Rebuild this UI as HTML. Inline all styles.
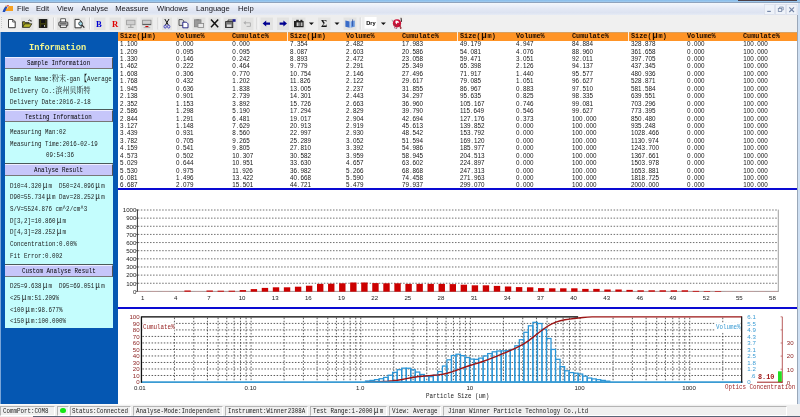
<!DOCTYPE html><html><head><meta charset="utf-8"><title>Winner Particle Size Analyser</title><style>

html,body{margin:0;padding:0;}
body{width:800px;height:417px;overflow:hidden;position:relative;background:#fff;font-family:"Liberation Sans","Noto Sans CJK SC",sans-serif;}
.abs{position:absolute;}
.t{position:absolute;white-space:pre;font:7px/8px "Liberation Mono","Noto Serif CJK SC",monospace;color:#1c1c1c;transform-origin:0 50%;transform:scaleX(.835);height:8px;}
.t b{font-weight:normal;font-size:8.4px;line-height:0;font-family:"Liberation Mono","Noto Serif CJK SC",serif;}
.t i,.h i,.s i{font-style:normal;display:inline-block;width:8.4px;text-align:center;font-size:9.4px;line-height:0;}
.h i{width:7.2px}
.h{position:absolute;white-space:pre;font:bold 7px/8px "Liberation Mono","Noto Serif CJK SC",monospace;color:#1a0a00;transform-origin:0 50%;transform:scaleX(.976);height:8px;}
.m{position:absolute;white-space:pre;font:7.6px/9px "Liberation Sans","Noto Sans CJK SC",sans-serif;color:#15151c;top:4px;height:9px;}
.s{position:absolute;white-space:pre;font:7px/8px "Liberation Mono","Noto Serif CJK SC",monospace;color:#1c1c1c;transform-origin:0 50%;transform:scaleX(.835);height:8px;top:406.5px;}
.box{position:absolute;left:5px;width:108px;background:#c4fdfd;}
.hd{position:absolute;left:5px;width:107px;height:10px;background:#c6c6fa;border-right:1px solid #555;border-bottom:1px solid #777;border-top:1px solid #eef;box-sizing:content-box;}
.ttl{position:absolute;left:29.4px;top:41.5px;height:12px;white-space:pre;font:bold 9.8px/12px "Liberation Mono","Noto Serif CJK SC",monospace;color:#f3f78e;transform-origin:0 50%;transform:scaleX(.885);}
.n{position:absolute;white-space:pre;font:6.31px/8px "Liberation Sans",sans-serif;color:#151515;height:8px;}
.n u{text-decoration:none;display:inline-block;width:3.51px;text-align:center;}
.sp{position:absolute;top:405.5px;height:10px;border:1px solid;border-color:#b4b4b4 #fff #fff #b4b4b4;box-sizing:border-box;}

</style></head><body><div id="w" style="position:absolute;left:0;top:0;width:800px;height:417px;overflow:hidden;will-change:transform">
<div class="abs" style="left:0;top:0;width:800px;height:3px;background:linear-gradient(#84bbea,#b4d4f1);"></div>
<div class="abs" style="left:738px;top:0;width:59px;height:1.4px;background:#4c4048;"></div>
<div class="abs" style="left:0;top:2.5px;width:800px;height:12px;background:linear-gradient(#f4f7fc,#e4e9f5 45%,#dde3f1 80%,#e6ebf5);"></div>
<div class="abs" style="left:0;top:2.2px;width:800px;height:.8px;background:#8fa3bd;"></div>
<div class="abs" style="left:0;top:14.6px;width:800px;height:17.2px;background:#f0f0f0;"></div>
<div class="abs" style="left:0;top:14.6px;width:404px;height:17.2px;background:#eeeeee;"></div>
<div class="m" style="left:17px">File</div>
<div class="m" style="left:36px">Edit</div>
<div class="m" style="left:57px">View</div>
<div class="m" style="left:81.2px">Analyse</div>
<div class="m" style="left:115.2px">Meassure</div>
<div class="m" style="left:157px">Windows</div>
<div class="m" style="left:196px">Language</div>
<div class="m" style="left:238px">Help</div>
<svg class="abs" style="left:2px;top:4px" width="12" height="9" viewBox="0 0 12 9"><path d="M1 7 L4 1 L5 5 L7 2 L11 2 L11 7 Z" fill="#f5a020"/><path d="M0.5 8 Q3 1 5.5 3 Q4 5 3 8Z" fill="#2050c0"/><path d="M4.5 1.5 L7 1 L6 3Z" fill="#d03020"/></svg>
<svg class="abs" style="left:764.4px;top:3.5px" width="34" height="11" viewBox="0 0 34 11"><rect x="0.5" y="0.5" width="10" height="10" fill="#eef2f9" stroke="#d5dbe8" stroke-width=".6"/><rect x="3.2" y="6.8" width="3.6" height="1.2" fill="#7485a6"/><rect x="11.5" y="0.5" width="10" height="10" fill="#eef2f9" stroke="#d5dbe8" stroke-width=".6"/><rect x="14.3" y="4.4" width="3.4" height="3" fill="none" stroke="#7485a6" stroke-width=".8"/><path d="M15.6 4.2V3.1H19.2V6H17.9" fill="none" stroke="#7485a6" stroke-width=".8"/><rect x="22.5" y="0.5" width="10.5" height="10" fill="#eef2f9" stroke="#d5dbe8" stroke-width=".6"/><path d="M25.3 3.3L30 8M30 3.3L25.3 8" stroke="#7485a6" stroke-width="1.1"/></svg>
<svg class="abs" style="left:0;top:0" width="800" height="32" viewBox="0 0 800 32"><path d="M1.5 17v12" stroke="#c8c8c8" stroke-width="1" stroke-dasharray="1 1"/><path d="M53.5 17.5v12" stroke="#c2c2c2" stroke-width=".8"/><path d="M54.3 17.5v12" stroke="#fff" stroke-width=".8"/><path d="M89.5 17.5v12" stroke="#c2c2c2" stroke-width=".8"/><path d="M90.3 17.5v12" stroke="#fff" stroke-width=".8"/><path d="M158 17.5v12" stroke="#c2c2c2" stroke-width=".8"/><path d="M158.8 17.5v12" stroke="#fff" stroke-width=".8"/><path d="M257 17.5v12" stroke="#c2c2c2" stroke-width=".8"/><path d="M257.8 17.5v12" stroke="#fff" stroke-width=".8"/><path d="M360.3 17.5v12" stroke="#c2c2c2" stroke-width=".8"/><path d="M361.1 17.5v12" stroke="#fff" stroke-width=".8"/><rect x="21" y="17.5" width="12.5" height="12.5" fill="#e3e3e2"/><rect x="37.3" y="17.5" width="11.5" height="12.5" fill="#e3e3e2"/><rect x="57" y="17.5" width="12.5" height="12.5" fill="#e3e3e2"/><rect x="73" y="17.5" width="12.5" height="12.5" fill="#e3e3e2"/><rect x="162" y="17.5" width="10" height="12.5" fill="#e3e3e2"/><rect x="177" y="17.5" width="12.5" height="12.5" fill="#e3e3e2"/><rect x="343.5" y="17.5" width="13" height="12.5" fill="#e3e3e2"/><rect x="94" y="17.5" width="11.5" height="12.5" fill="#e3e3e2"/><rect x="109.5" y="17.5" width="11.5" height="12.5" fill="#e3e3e2"/><rect x="124.5" y="17.5" width="12.5" height="12.5" fill="#e3e3e2"/><rect x="140.5" y="17.5" width="12.5" height="12.5" fill="#e3e3e2"/><rect x="192.5" y="17.5" width="13" height="12.5" fill="#e3e3e2"/><rect x="208.5" y="17.5" width="12" height="12.5" fill="#e3e3e2"/><rect x="223.5" y="17.5" width="14" height="12.5" fill="#e3e3e2"/><rect x="241" y="17.5" width="12.5" height="12.5" fill="#e3e3e2"/><rect x="260.5" y="17.5" width="12.5" height="12.5" fill="#e3e3e2"/><rect x="277" y="17.5" width="12" height="12.5" fill="#e3e3e2"/><rect x="292" y="17.5" width="13.5" height="12.5" fill="#e3e3e2"/><rect x="318" y="17.5" width="12.5" height="12.5" fill="#e3e3e2"/><path d="M8.5 19.5h4.4l2.3 2.3v5.9h-6.7z" fill="#fff" stroke="#222" stroke-width=".9"/><path d="M12.7 19.6v2.4h2.4" fill="none" stroke="#222" stroke-width=".7"/><path d="M22.5 27.3v-5.6h2.2l.8.9h3.6v1.3" fill="#8c8c18" stroke="#222" stroke-width=".8"/><path d="M22.6 27.4l2-3.6h7.2l-2.2 3.6z" fill="#b4b428" stroke="#222" stroke-width=".8"/><path d="M28.3 20.6q1.6-1.4 2.8.3" fill="none" stroke="#222" stroke-width=".8"/><path d="M30.3 21.6l1.4-.2-.3-1.5z" fill="#222"/><rect x="39.3" y="19.6" width="7.6" height="7.8" fill="#3c3c0c" stroke="#111" stroke-width=".9"/><rect x="41" y="19.8" width="4.3" height="3.2" fill="#111"/><rect x="41.2" y="24.6" width="4" height="2.8" fill="#111"/><rect x="44" y="25.1" width=".9" height="1.7" fill="#ddd"/><rect x="60.8" y="18.8" width="4.8" height="3.4" fill="#fff" stroke="#222" stroke-width=".7"/><rect x="58.8" y="22" width="9" height="4" rx=".8" fill="#c8c8c8" stroke="#222" stroke-width=".8"/><rect x="60.3" y="25" width="6" height="2.6" fill="#eee" stroke="#222" stroke-width=".7"/><path d="M60 23.5h6.5" stroke="#333" stroke-width=".6"/><path d="M75 19.4h4.2l2 2v6.4H75z" fill="#fff" stroke="#222" stroke-width=".9"/><circle cx="80.6" cy="23.6" r="1.9" fill="#9fd8e8" stroke="#222" stroke-width=".8"/><path d="M82 25.2l2.3 2.5" stroke="#222" stroke-width="1.2"/><path d="M164.8 19l3.6 6.2M169 19l-3.6 6.2" stroke="#111" stroke-width="1"/><ellipse cx="165.2" cy="26.6" rx="1.2" ry="1.5" fill="none" stroke="#3838c0" stroke-width=".9"/><ellipse cx="168.7" cy="26.6" rx="1.2" ry="1.5" fill="none" stroke="#3838c0" stroke-width=".9"/><path d="M179 19.6h3.4l1.4 1.4v4.4H179z" fill="#ddd" stroke="#333" stroke-width=".8"/><path d="M182.8 22.2h3.6l1.6 1.6v4H182.8z" fill="#fff" stroke="#181880" stroke-width=".9"/><rect x="194.5" y="19.8" width="6.5" height="7" fill="#9a9a9a" stroke="#808080" stroke-width=".8"/><rect x="196.4" y="19" width="2.8" height="1.6" fill="#888"/><rect x="198" y="23.4" width="5.6" height="4.2" fill="#e8e8e8" stroke="#888" stroke-width=".8"/><path d="M211 19.6l7.2 7.6M218.2 19.6l-7.2 7.6" stroke="#111" stroke-width="1.5"/><rect x="225.6" y="21.6" width="7.2" height="6" fill="#777" stroke="#222" stroke-width=".8"/><rect x="227" y="24.5" width="4.4" height="2.4" fill="#ddd"/><path d="M228 21.6v-1.6h5.2" fill="none" stroke="#222" stroke-width=".8"/><rect x="232.6" y="19.2" width="3" height="2.6" fill="#1a1a90"/><path d="M244 22.8h6.4v3.6h-3.8" fill="none" stroke="#b0b0b0" stroke-width="1"/><path d="M245.8 20.8l-2.4 2 2.4 2z" fill="#b0b0b0"/><path d="M262.6 23.6l3.6-3v1.9h3.8v2.2h-3.8v1.9z" fill="#000090"/><path d="M287 23.6l-3.6-3v1.9h-3.8v2.2h3.8v1.9z" fill="#000090"/><rect x="294" y="21" width="9.6" height="6.2" fill="#222"/><rect x="296.2" y="19.8" width="2.6" height="1.4" fill="#222"/><rect x="300.4" y="19.8" width="2" height="1.4" fill="#222"/><rect x="296.6" y="22.4" width="2" height="3.6" fill="#ccc"/><rect x="299.4" y="22.4" width="1" height="3.6" fill="#aaa"/><rect x="301.2" y="22.4" width="1.2" height="3.6" fill="#ddd"/><path d="M308.9 22.4h5l-2.5 2.7z" fill="#111"/><path d="M334.5 22.4h5l-2.5 2.7z" fill="#111"/><path d="M380.9 22.4h5l-2.5 2.7z" fill="#111"/><path d="M345.4 20.4l4.4 1v6.4l-4.4-1z" fill="#3a6cc8"/><path d="M354.8 20.4l-4.4 1v6.4l4.4-1z" fill="#6a9ae0"/><path d="M350.1 19.2v9.2" stroke="#c8d8f0" stroke-width=".9"/><path d="M352.6 19.4v7" stroke="#1a3a90" stroke-width=".7"/><rect x="364.6" y="17" width="12" height="11.6" fill="#fff"/><path d="M391.4 19.6l2 .6-.8 2.2z" fill="#b8b8b8"/><circle cx="397" cy="23.3" r="4.1" fill="#cc1038"/><path d="M395.6 20.4l2.6.6 1 2-1.6-.4-1 1.6-1.2-1.4z" fill="#fff"/><path d="M394.6 24.2l1.6 1.8" stroke="#3a6a4a" stroke-width=".8"/><path d="M401 17.8l.5 4" stroke="#2a1a1a" stroke-width="1"/><path d="M399.6 25.4l1.4 3.2" stroke="#8a0818" stroke-width="1.5"/><path d="M399.9 26.4v1.6" stroke="#fff" stroke-width=".6"/><path d="M394.6 27.2l.6 1.4M396.6 27.6v1.2" stroke="#702040" stroke-width=".8"/><text x="98.9" y="26.8" font-family="Liberation Serif,serif" font-weight="bold" font-size="8.6" fill="#0000d0" text-anchor="middle">B</text><text x="115" y="26.8" font-family="Liberation Serif,serif" font-weight="bold" font-size="8.6" fill="#e00000" text-anchor="middle">R</text><text x="324" y="27" font-family="Liberation Serif,serif" font-weight="bold" font-size="9.5" fill="#111" text-anchor="middle">&#931;</text><text x="366.2" y="25.1" font-family="Liberation Sans,sans-serif" font-weight="bold" font-size="6.1" fill="#000" textLength="9.5" lengthAdjust="spacingAndGlyphs">Dry</text><rect x="126.6" y="20.2" width="8.4" height="4.6" fill="#cfcfcf" stroke="#999" stroke-width=".8"/><path d="M130.8 24.8v2.2M128 27.4h5.6" stroke="#999" stroke-width=".9"/><rect x="142.6" y="20.2" width="8.4" height="4.6" fill="#cfcfcf" stroke="#888" stroke-width=".8"/><path d="M142.6 24.4h8.4" stroke="#555" stroke-width="1"/><path d="M145.4 26.6h3" stroke="#d00000" stroke-width="1.2"/><path d="M143.6 27.6h6.6" stroke="#999" stroke-width=".7"/></svg>
<div class="abs" style="left:0;top:31.8px;width:117.6px;height:372px;background:#0557b2;"></div>
<div class="abs" style="left:0;top:31.8px;width:.7px;height:372px;background:#7aa5d8;"></div>
<div class="ttl">Information</div>
<div class="box" style="top:57px;height:52.2px"></div>
<div class="abs" style="left:5px;top:109.2px;width:108px;height:.9px;background:#4a5a5a"></div>
<div class="box" style="top:110.1px;height:52.5px"></div>
<div class="abs" style="left:5px;top:162.6px;width:108px;height:.9px;background:#4a5a5a"></div>
<div class="box" style="top:163.5px;height:100.10000000000002px"></div>
<div class="abs" style="left:5px;top:263.6px;width:108px;height:.9px;background:#4a5a5a"></div>
<div class="box" style="top:264.5px;height:63.5px"></div>
<div class="hd" style="top:57px"></div>
<div class="t" style="left:27px;top:59.1px;color:#000">Sample Information</div>
<div class="hd" style="top:110.1px"></div>
<div class="t" style="left:25.3px;top:112.89999999999999px;color:#000">Testing Information</div>
<div class="hd" style="top:163.5px"></div>
<div class="t" style="left:34px;top:165.6px;color:#000">Analyse Result</div>
<div class="hd" style="top:264.5px"></div>
<div class="t" style="left:21.8px;top:266.6px;color:#000">Custom Analyse Result</div>
<div class="t" style="left:10px;top:75.2px;">Sample Name:<b class="c">粉末</b>-gan<b class="c">【</b>Average</div>
<div class="t" style="left:10px;top:87.2px;">Delivery Co.:<b class="c">滨州贝斯特</b></div>
<div class="t" style="left:10px;top:98.3px;">Delivery Date:2016-2-18</div>
<div class="t" style="left:10px;top:127.60000000000001px;">Measuring Man:02</div>
<div class="t" style="left:10px;top:139.6px;">Measuring Time:2016-02-19</div>
<div class="t" style="left:45.5px;top:151.29999999999998px;">09:54:36</div>
<div class="t" style="left:10px;top:181.7px;">D10=4.320<i>μ</i>m  D50=24.096<i>μ</i>m</div>
<div class="t" style="left:10px;top:192.7px;">D90=55.734<i>μ</i>m Dav=28.252<i>μ</i>m</div>
<div class="t" style="left:10px;top:204.5px;">S/V=5524.876 cm^2/cm^3</div>
<div class="t" style="left:10px;top:216.89999999999998px;">D[3,2]=10.860<i>μ</i>m</div>
<div class="t" style="left:10px;top:228.29999999999998px;">D[4,3]=28.252<i>μ</i>m</div>
<div class="t" style="left:10px;top:239.5px;">Concentration:0.00%</div>
<div class="t" style="left:10px;top:251.89999999999998px;">Fit Error:0.002</div>
<div class="t" style="left:10px;top:282.0px;">D25=9.638<i>μ</i>m  D95=69.051<i>μ</i>m</div>
<div class="t" style="left:10px;top:293.9px;">&lt;25<i>μ</i>m:51.209%</div>
<div class="t" style="left:10px;top:305.5px;">&lt;100<i>μ</i>m:98.677%</div>
<div class="t" style="left:10px;top:317.0px;">&lt;150<i>μ</i>m:100.000%</div>
<div class="abs" style="left:117.6px;top:32px;width:679.6px;height:8.5px;background:#ff9426;"></div>
<div class="abs" style="left:117.6px;top:31.6px;width:679.6px;height:.7px;background:#d9a060;"></div>
<div class="abs" style="left:286.8px;top:32px;width:1.0px;height:8.5px;background:#fdf0e0;"></div>
<div class="abs" style="left:456.9px;top:32px;width:1.5px;height:8.5px;background:#fdf0e0;"></div>
<div class="abs" style="left:627.8px;top:32px;width:1.2px;height:8.5px;background:#fdf0e0;"></div>
<div class="abs" style="left:117.6px;top:41px;width:679.6px;height:147.2px;overflow:hidden;">
<div class="n" style="left:2.4px;top:-0.80px">1<u>.</u>100</div>
<div class="n" style="left:58.4px;top:-0.80px">0<u>.</u>000</div>
<div class="n" style="left:114.6px;top:-0.80px">0<u>.</u>000</div>
<div class="n" style="left:2.4px;top:6.63px">1<u>.</u>209</div>
<div class="n" style="left:58.4px;top:6.63px">0<u>.</u>095</div>
<div class="n" style="left:114.6px;top:6.63px">0<u>.</u>095</div>
<div class="n" style="left:2.4px;top:14.06px">1<u>.</u>330</div>
<div class="n" style="left:58.4px;top:14.06px">0<u>.</u>146</div>
<div class="n" style="left:114.6px;top:14.06px">0<u>.</u>242</div>
<div class="n" style="left:2.4px;top:21.49px">1<u>.</u>462</div>
<div class="n" style="left:58.4px;top:21.49px">0<u>.</u>222</div>
<div class="n" style="left:114.6px;top:21.49px">0<u>.</u>464</div>
<div class="n" style="left:2.4px;top:28.92px">1<u>.</u>608</div>
<div class="n" style="left:58.4px;top:28.92px">0<u>.</u>306</div>
<div class="n" style="left:114.6px;top:28.92px">0<u>.</u>770</div>
<div class="n" style="left:2.4px;top:36.35px">1<u>.</u>768</div>
<div class="n" style="left:58.4px;top:36.35px">0<u>.</u>432</div>
<div class="n" style="left:114.6px;top:36.35px">1<u>.</u>202</div>
<div class="n" style="left:2.4px;top:43.78px">1<u>.</u>945</div>
<div class="n" style="left:58.4px;top:43.78px">0<u>.</u>636</div>
<div class="n" style="left:114.6px;top:43.78px">1<u>.</u>838</div>
<div class="n" style="left:2.4px;top:51.21px">2<u>.</u>138</div>
<div class="n" style="left:58.4px;top:51.21px">0<u>.</u>901</div>
<div class="n" style="left:114.6px;top:51.21px">2<u>.</u>739</div>
<div class="n" style="left:2.4px;top:58.64px">2<u>.</u>352</div>
<div class="n" style="left:58.4px;top:58.64px">1<u>.</u>153</div>
<div class="n" style="left:114.6px;top:58.64px">3<u>.</u>892</div>
<div class="n" style="left:2.4px;top:66.07px">2<u>.</u>586</div>
<div class="n" style="left:58.4px;top:66.07px">1<u>.</u>298</div>
<div class="n" style="left:114.6px;top:66.07px">5<u>.</u>190</div>
<div class="n" style="left:2.4px;top:73.50px">2<u>.</u>844</div>
<div class="n" style="left:58.4px;top:73.50px">1<u>.</u>291</div>
<div class="n" style="left:114.6px;top:73.50px">6<u>.</u>481</div>
<div class="n" style="left:2.4px;top:80.93px">3<u>.</u>127</div>
<div class="n" style="left:58.4px;top:80.93px">1<u>.</u>148</div>
<div class="n" style="left:114.6px;top:80.93px">7<u>.</u>629</div>
<div class="n" style="left:2.4px;top:88.36px">3<u>.</u>439</div>
<div class="n" style="left:58.4px;top:88.36px">0<u>.</u>931</div>
<div class="n" style="left:114.6px;top:88.36px">8<u>.</u>560</div>
<div class="n" style="left:2.4px;top:95.79px">3<u>.</u>782</div>
<div class="n" style="left:58.4px;top:95.79px">0<u>.</u>705</div>
<div class="n" style="left:114.6px;top:95.79px">9<u>.</u>265</div>
<div class="n" style="left:2.4px;top:103.22px">4<u>.</u>159</div>
<div class="n" style="left:58.4px;top:103.22px">0<u>.</u>541</div>
<div class="n" style="left:114.6px;top:103.22px">9<u>.</u>805</div>
<div class="n" style="left:2.4px;top:110.65px">4<u>.</u>573</div>
<div class="n" style="left:58.4px;top:110.65px">0<u>.</u>502</div>
<div class="n" style="left:114.6px;top:110.65px">10<u>.</u>307</div>
<div class="n" style="left:2.4px;top:118.08px">5<u>.</u>029</div>
<div class="n" style="left:58.4px;top:118.08px">0<u>.</u>644</div>
<div class="n" style="left:114.6px;top:118.08px">10<u>.</u>951</div>
<div class="n" style="left:2.4px;top:125.51px">5<u>.</u>530</div>
<div class="n" style="left:58.4px;top:125.51px">0<u>.</u>975</div>
<div class="n" style="left:114.6px;top:125.51px">11<u>.</u>926</div>
<div class="n" style="left:2.4px;top:132.94px">6<u>.</u>081</div>
<div class="n" style="left:58.4px;top:132.94px">1<u>.</u>496</div>
<div class="n" style="left:114.6px;top:132.94px">13<u>.</u>422</div>
<div class="n" style="left:2.4px;top:140.37px">6<u>.</u>687</div>
<div class="n" style="left:58.4px;top:140.37px">2<u>.</u>079</div>
<div class="n" style="left:114.6px;top:140.37px">15<u>.</u>501</div>
<div class="n" style="left:172.3px;top:-0.80px">7<u>.</u>354</div>
<div class="n" style="left:228.3px;top:-0.80px">2<u>.</u>482</div>
<div class="n" style="left:284.5px;top:-0.80px">17<u>.</u>983</div>
<div class="n" style="left:172.3px;top:6.63px">8<u>.</u>087</div>
<div class="n" style="left:228.3px;top:6.63px">2<u>.</u>603</div>
<div class="n" style="left:284.5px;top:6.63px">20<u>.</u>586</div>
<div class="n" style="left:172.3px;top:14.06px">8<u>.</u>893</div>
<div class="n" style="left:228.3px;top:14.06px">2<u>.</u>472</div>
<div class="n" style="left:284.5px;top:14.06px">23<u>.</u>058</div>
<div class="n" style="left:172.3px;top:21.49px">9<u>.</u>779</div>
<div class="n" style="left:228.3px;top:21.49px">2<u>.</u>291</div>
<div class="n" style="left:284.5px;top:21.49px">25<u>.</u>349</div>
<div class="n" style="left:172.3px;top:28.92px">10<u>.</u>754</div>
<div class="n" style="left:228.3px;top:28.92px">2<u>.</u>146</div>
<div class="n" style="left:284.5px;top:28.92px">27<u>.</u>496</div>
<div class="n" style="left:172.3px;top:36.35px">11<u>.</u>826</div>
<div class="n" style="left:228.3px;top:36.35px">2<u>.</u>122</div>
<div class="n" style="left:284.5px;top:36.35px">29<u>.</u>617</div>
<div class="n" style="left:172.3px;top:43.78px">13<u>.</u>005</div>
<div class="n" style="left:228.3px;top:43.78px">2<u>.</u>237</div>
<div class="n" style="left:284.5px;top:43.78px">31<u>.</u>855</div>
<div class="n" style="left:172.3px;top:51.21px">14<u>.</u>301</div>
<div class="n" style="left:228.3px;top:51.21px">2<u>.</u>443</div>
<div class="n" style="left:284.5px;top:51.21px">34<u>.</u>297</div>
<div class="n" style="left:172.3px;top:58.64px">15<u>.</u>726</div>
<div class="n" style="left:228.3px;top:58.64px">2<u>.</u>663</div>
<div class="n" style="left:284.5px;top:58.64px">36<u>.</u>960</div>
<div class="n" style="left:172.3px;top:66.07px">17<u>.</u>294</div>
<div class="n" style="left:228.3px;top:66.07px">2<u>.</u>829</div>
<div class="n" style="left:284.5px;top:66.07px">39<u>.</u>790</div>
<div class="n" style="left:172.3px;top:73.50px">19<u>.</u>017</div>
<div class="n" style="left:228.3px;top:73.50px">2<u>.</u>904</div>
<div class="n" style="left:284.5px;top:73.50px">42<u>.</u>694</div>
<div class="n" style="left:172.3px;top:80.93px">20<u>.</u>913</div>
<div class="n" style="left:228.3px;top:80.93px">2<u>.</u>919</div>
<div class="n" style="left:284.5px;top:80.93px">45<u>.</u>613</div>
<div class="n" style="left:172.3px;top:88.36px">22<u>.</u>997</div>
<div class="n" style="left:228.3px;top:88.36px">2<u>.</u>930</div>
<div class="n" style="left:284.5px;top:88.36px">48<u>.</u>542</div>
<div class="n" style="left:172.3px;top:95.79px">25<u>.</u>289</div>
<div class="n" style="left:228.3px;top:95.79px">3<u>.</u>052</div>
<div class="n" style="left:284.5px;top:95.79px">51<u>.</u>594</div>
<div class="n" style="left:172.3px;top:103.22px">27<u>.</u>810</div>
<div class="n" style="left:228.3px;top:103.22px">3<u>.</u>392</div>
<div class="n" style="left:284.5px;top:103.22px">54<u>.</u>986</div>
<div class="n" style="left:172.3px;top:110.65px">30<u>.</u>582</div>
<div class="n" style="left:228.3px;top:110.65px">3<u>.</u>959</div>
<div class="n" style="left:284.5px;top:110.65px">58<u>.</u>945</div>
<div class="n" style="left:172.3px;top:118.08px">33<u>.</u>630</div>
<div class="n" style="left:228.3px;top:118.08px">4<u>.</u>657</div>
<div class="n" style="left:284.5px;top:118.08px">63<u>.</u>602</div>
<div class="n" style="left:172.3px;top:125.51px">36<u>.</u>982</div>
<div class="n" style="left:228.3px;top:125.51px">5<u>.</u>266</div>
<div class="n" style="left:284.5px;top:125.51px">68<u>.</u>868</div>
<div class="n" style="left:172.3px;top:132.94px">40<u>.</u>668</div>
<div class="n" style="left:228.3px;top:132.94px">5<u>.</u>590</div>
<div class="n" style="left:284.5px;top:132.94px">74<u>.</u>458</div>
<div class="n" style="left:172.3px;top:140.37px">44<u>.</u>721</div>
<div class="n" style="left:228.3px;top:140.37px">5<u>.</u>479</div>
<div class="n" style="left:284.5px;top:140.37px">79<u>.</u>937</div>
<div class="n" style="left:342.3px;top:-0.80px">49<u>.</u>179</div>
<div class="n" style="left:398.3px;top:-0.80px">4<u>.</u>947</div>
<div class="n" style="left:454.5px;top:-0.80px">84<u>.</u>884</div>
<div class="n" style="left:342.3px;top:6.63px">54<u>.</u>081</div>
<div class="n" style="left:398.3px;top:6.63px">4<u>.</u>076</div>
<div class="n" style="left:454.5px;top:6.63px">88<u>.</u>960</div>
<div class="n" style="left:342.3px;top:14.06px">59<u>.</u>471</div>
<div class="n" style="left:398.3px;top:14.06px">3<u>.</u>051</div>
<div class="n" style="left:454.5px;top:14.06px">92<u>.</u>011</div>
<div class="n" style="left:342.3px;top:21.49px">65<u>.</u>398</div>
<div class="n" style="left:398.3px;top:21.49px">2<u>.</u>126</div>
<div class="n" style="left:454.5px;top:21.49px">94<u>.</u>137</div>
<div class="n" style="left:342.3px;top:28.92px">71<u>.</u>917</div>
<div class="n" style="left:398.3px;top:28.92px">1<u>.</u>440</div>
<div class="n" style="left:454.5px;top:28.92px">95<u>.</u>577</div>
<div class="n" style="left:342.3px;top:36.35px">79<u>.</u>085</div>
<div class="n" style="left:398.3px;top:36.35px">1<u>.</u>051</div>
<div class="n" style="left:454.5px;top:36.35px">96<u>.</u>627</div>
<div class="n" style="left:342.3px;top:43.78px">86<u>.</u>967</div>
<div class="n" style="left:398.3px;top:43.78px">0<u>.</u>883</div>
<div class="n" style="left:454.5px;top:43.78px">97<u>.</u>510</div>
<div class="n" style="left:342.3px;top:51.21px">95<u>.</u>635</div>
<div class="n" style="left:398.3px;top:51.21px">0<u>.</u>825</div>
<div class="n" style="left:454.5px;top:51.21px">98<u>.</u>335</div>
<div class="n" style="left:342.3px;top:58.64px">105<u>.</u>167</div>
<div class="n" style="left:398.3px;top:58.64px">0<u>.</u>746</div>
<div class="n" style="left:454.5px;top:58.64px">99<u>.</u>081</div>
<div class="n" style="left:342.3px;top:66.07px">115<u>.</u>649</div>
<div class="n" style="left:398.3px;top:66.07px">0<u>.</u>546</div>
<div class="n" style="left:454.5px;top:66.07px">99<u>.</u>627</div>
<div class="n" style="left:342.3px;top:73.50px">127<u>.</u>176</div>
<div class="n" style="left:398.3px;top:73.50px">0<u>.</u>373</div>
<div class="n" style="left:454.5px;top:73.50px">100<u>.</u>000</div>
<div class="n" style="left:342.3px;top:80.93px">139<u>.</u>852</div>
<div class="n" style="left:398.3px;top:80.93px">0<u>.</u>000</div>
<div class="n" style="left:454.5px;top:80.93px">100<u>.</u>000</div>
<div class="n" style="left:342.3px;top:88.36px">153<u>.</u>792</div>
<div class="n" style="left:398.3px;top:88.36px">0<u>.</u>000</div>
<div class="n" style="left:454.5px;top:88.36px">100<u>.</u>000</div>
<div class="n" style="left:342.3px;top:95.79px">169<u>.</u>120</div>
<div class="n" style="left:398.3px;top:95.79px">0<u>.</u>000</div>
<div class="n" style="left:454.5px;top:95.79px">100<u>.</u>000</div>
<div class="n" style="left:342.3px;top:103.22px">185<u>.</u>977</div>
<div class="n" style="left:398.3px;top:103.22px">0<u>.</u>000</div>
<div class="n" style="left:454.5px;top:103.22px">100<u>.</u>000</div>
<div class="n" style="left:342.3px;top:110.65px">204<u>.</u>513</div>
<div class="n" style="left:398.3px;top:110.65px">0<u>.</u>000</div>
<div class="n" style="left:454.5px;top:110.65px">100<u>.</u>000</div>
<div class="n" style="left:342.3px;top:118.08px">224<u>.</u>897</div>
<div class="n" style="left:398.3px;top:118.08px">0<u>.</u>000</div>
<div class="n" style="left:454.5px;top:118.08px">100<u>.</u>000</div>
<div class="n" style="left:342.3px;top:125.51px">247<u>.</u>313</div>
<div class="n" style="left:398.3px;top:125.51px">0<u>.</u>000</div>
<div class="n" style="left:454.5px;top:125.51px">100<u>.</u>000</div>
<div class="n" style="left:342.3px;top:132.94px">271<u>.</u>963</div>
<div class="n" style="left:398.3px;top:132.94px">0<u>.</u>000</div>
<div class="n" style="left:454.5px;top:132.94px">100<u>.</u>000</div>
<div class="n" style="left:342.3px;top:140.37px">299<u>.</u>070</div>
<div class="n" style="left:398.3px;top:140.37px">0<u>.</u>000</div>
<div class="n" style="left:454.5px;top:140.37px">100<u>.</u>000</div>
<div class="n" style="left:513.5px;top:-0.80px">328<u>.</u>878</div>
<div class="n" style="left:569.5px;top:-0.80px">0<u>.</u>000</div>
<div class="n" style="left:625.7px;top:-0.80px">100<u>.</u>000</div>
<div class="n" style="left:513.5px;top:6.63px">361<u>.</u>658</div>
<div class="n" style="left:569.5px;top:6.63px">0<u>.</u>000</div>
<div class="n" style="left:625.7px;top:6.63px">100<u>.</u>000</div>
<div class="n" style="left:513.5px;top:14.06px">397<u>.</u>705</div>
<div class="n" style="left:569.5px;top:14.06px">0<u>.</u>000</div>
<div class="n" style="left:625.7px;top:14.06px">100<u>.</u>000</div>
<div class="n" style="left:513.5px;top:21.49px">437<u>.</u>345</div>
<div class="n" style="left:569.5px;top:21.49px">0<u>.</u>000</div>
<div class="n" style="left:625.7px;top:21.49px">100<u>.</u>000</div>
<div class="n" style="left:513.5px;top:28.92px">480<u>.</u>936</div>
<div class="n" style="left:569.5px;top:28.92px">0<u>.</u>000</div>
<div class="n" style="left:625.7px;top:28.92px">100<u>.</u>000</div>
<div class="n" style="left:513.5px;top:36.35px">528<u>.</u>871</div>
<div class="n" style="left:569.5px;top:36.35px">0<u>.</u>000</div>
<div class="n" style="left:625.7px;top:36.35px">100<u>.</u>000</div>
<div class="n" style="left:513.5px;top:43.78px">581<u>.</u>584</div>
<div class="n" style="left:569.5px;top:43.78px">0<u>.</u>000</div>
<div class="n" style="left:625.7px;top:43.78px">100<u>.</u>000</div>
<div class="n" style="left:513.5px;top:51.21px">639<u>.</u>551</div>
<div class="n" style="left:569.5px;top:51.21px">0<u>.</u>000</div>
<div class="n" style="left:625.7px;top:51.21px">100<u>.</u>000</div>
<div class="n" style="left:513.5px;top:58.64px">703<u>.</u>296</div>
<div class="n" style="left:569.5px;top:58.64px">0<u>.</u>000</div>
<div class="n" style="left:625.7px;top:58.64px">100<u>.</u>000</div>
<div class="n" style="left:513.5px;top:66.07px">773<u>.</u>395</div>
<div class="n" style="left:569.5px;top:66.07px">0<u>.</u>000</div>
<div class="n" style="left:625.7px;top:66.07px">100<u>.</u>000</div>
<div class="n" style="left:513.5px;top:73.50px">850<u>.</u>480</div>
<div class="n" style="left:569.5px;top:73.50px">0<u>.</u>000</div>
<div class="n" style="left:625.7px;top:73.50px">100<u>.</u>000</div>
<div class="n" style="left:513.5px;top:80.93px">935<u>.</u>248</div>
<div class="n" style="left:569.5px;top:80.93px">0<u>.</u>000</div>
<div class="n" style="left:625.7px;top:80.93px">100<u>.</u>000</div>
<div class="n" style="left:513.5px;top:88.36px">1028<u>.</u>466</div>
<div class="n" style="left:569.5px;top:88.36px">0<u>.</u>000</div>
<div class="n" style="left:625.7px;top:88.36px">100<u>.</u>000</div>
<div class="n" style="left:513.5px;top:95.79px">1130<u>.</u>974</div>
<div class="n" style="left:569.5px;top:95.79px">0<u>.</u>000</div>
<div class="n" style="left:625.7px;top:95.79px">100<u>.</u>000</div>
<div class="n" style="left:513.5px;top:103.22px">1243<u>.</u>700</div>
<div class="n" style="left:569.5px;top:103.22px">0<u>.</u>000</div>
<div class="n" style="left:625.7px;top:103.22px">100<u>.</u>000</div>
<div class="n" style="left:513.5px;top:110.65px">1367<u>.</u>661</div>
<div class="n" style="left:569.5px;top:110.65px">0<u>.</u>000</div>
<div class="n" style="left:625.7px;top:110.65px">100<u>.</u>000</div>
<div class="n" style="left:513.5px;top:118.08px">1503<u>.</u>978</div>
<div class="n" style="left:569.5px;top:118.08px">0<u>.</u>000</div>
<div class="n" style="left:625.7px;top:118.08px">100<u>.</u>000</div>
<div class="n" style="left:513.5px;top:125.51px">1653<u>.</u>881</div>
<div class="n" style="left:569.5px;top:125.51px">0<u>.</u>000</div>
<div class="n" style="left:625.7px;top:125.51px">100<u>.</u>000</div>
<div class="n" style="left:513.5px;top:132.94px">1818<u>.</u>725</div>
<div class="n" style="left:569.5px;top:132.94px">0<u>.</u>000</div>
<div class="n" style="left:625.7px;top:132.94px">100<u>.</u>000</div>
<div class="n" style="left:513.5px;top:140.37px">2000<u>.</u>000</div>
<div class="n" style="left:569.5px;top:140.37px">0<u>.</u>000</div>
<div class="n" style="left:625.7px;top:140.37px">100<u>.</u>000</div>
</div>
<div class="h" style="left:120.0px;top:32.40px">Size(<i>μ</i>m)</div>
<div class="h" style="left:176.0px;top:32.40px">Volume%</div>
<div class="h" style="left:232.2px;top:32.40px">Cumulate%</div>
<div class="h" style="left:289.9px;top:32.40px">Size(<i>μ</i>m)</div>
<div class="h" style="left:345.9px;top:32.40px">Volume%</div>
<div class="h" style="left:402.1px;top:32.40px">Cumulate%</div>
<div class="h" style="left:459.9px;top:32.40px">Size(<i>μ</i>m)</div>
<div class="h" style="left:515.9px;top:32.40px">Volume%</div>
<div class="h" style="left:572.1px;top:32.40px">Cumulate%</div>
<div class="h" style="left:631.1px;top:32.40px">Size(<i>μ</i>m)</div>
<div class="h" style="left:687.1px;top:32.40px">Volume%</div>
<div class="h" style="left:743.3px;top:32.40px">Cumulate%</div>
<div class="abs" style="left:117.6px;top:188.2px;width:679.6px;height:2.1px;background:#0a0ad2;"></div>
<div class="abs" style="left:117.6px;top:307px;width:679.6px;height:2.2px;background:#0a0ad2;"></div>
<div class="abs" style="left:797.2px;top:14.5px;width:.8px;height:402px;background:#9aa7b8;"></div>
<div class="abs" style="left:798px;top:3px;width:2px;height:414px;background:#cfe0f3;"></div>
<svg class="abs" style="left:0;top:0;font-family:'Liberation Sans',sans-serif" width="800" height="417" viewBox="0 0 800 417"><path d="M137.8 283.26H778.2" stroke="#404040" stroke-width=".75" stroke-dasharray="1.5 1.55"/><path d="M137.8 275.12H778.2" stroke="#404040" stroke-width=".75" stroke-dasharray="1.5 1.55"/><path d="M137.8 266.98H778.2" stroke="#404040" stroke-width=".75" stroke-dasharray="1.5 1.55"/><path d="M137.8 258.84H778.2" stroke="#404040" stroke-width=".75" stroke-dasharray="1.5 1.55"/><path d="M137.8 250.70H778.2" stroke="#404040" stroke-width=".75" stroke-dasharray="1.5 1.55"/><path d="M137.8 242.56H778.2" stroke="#404040" stroke-width=".75" stroke-dasharray="1.5 1.55"/><path d="M137.8 234.42H778.2" stroke="#404040" stroke-width=".75" stroke-dasharray="1.5 1.55"/><path d="M137.8 226.28H778.2" stroke="#404040" stroke-width=".75" stroke-dasharray="1.5 1.55"/><path d="M137.8 218.14H778.2" stroke="#404040" stroke-width=".75" stroke-dasharray="1.5 1.55"/><path d="M137.8 210.00H778.2" stroke="#404040" stroke-width=".75" stroke-dasharray="1.5 1.55"/><path d="M137.4 209.4V291.8" stroke="#333" stroke-width="1"/><path d="M778.3 209.6V291.6" stroke="#777" stroke-width=".7"/><path d="M137 291.4H778.6" stroke="#9a8a8a" stroke-width=".9"/><path d="M136 291.40h1.6" stroke="#333" stroke-width=".7"/><text x="136.4" y="293.70" text-anchor="end" font-size="6.1" fill="#222">0</text><path d="M136 283.26h1.6" stroke="#333" stroke-width=".7"/><text x="136.4" y="285.56" text-anchor="end" font-size="6.1" fill="#222">100</text><path d="M136 275.12h1.6" stroke="#333" stroke-width=".7"/><text x="136.4" y="277.42" text-anchor="end" font-size="6.1" fill="#222">200</text><path d="M136 266.98h1.6" stroke="#333" stroke-width=".7"/><text x="136.4" y="269.28" text-anchor="end" font-size="6.1" fill="#222">300</text><path d="M136 258.84h1.6" stroke="#333" stroke-width=".7"/><text x="136.4" y="261.14" text-anchor="end" font-size="6.1" fill="#222">400</text><path d="M136 250.70h1.6" stroke="#333" stroke-width=".7"/><text x="136.4" y="253.00" text-anchor="end" font-size="6.1" fill="#222">500</text><path d="M136 242.56h1.6" stroke="#333" stroke-width=".7"/><text x="136.4" y="244.86" text-anchor="end" font-size="6.1" fill="#222">600</text><path d="M136 234.42h1.6" stroke="#333" stroke-width=".7"/><text x="136.4" y="236.72" text-anchor="end" font-size="6.1" fill="#222">700</text><path d="M136 226.28h1.6" stroke="#333" stroke-width=".7"/><text x="136.4" y="228.58" text-anchor="end" font-size="6.1" fill="#222">800</text><path d="M136 218.14h1.6" stroke="#333" stroke-width=".7"/><text x="136.4" y="220.44" text-anchor="end" font-size="6.1" fill="#222">900</text><path d="M136 210.00h1.6" stroke="#333" stroke-width=".7"/><text x="136.4" y="212.30" text-anchor="end" font-size="6.1" fill="#222">1000</text><rect x="140.20" y="291.45" width="6.4" height="0.25" fill="#e89090"/><text x="142.60" y="299.6" text-anchor="middle" font-size="6.1" fill="#222">1</text><rect x="151.25" y="291.45" width="6.4" height="0.25" fill="#e89090"/><rect x="162.30" y="291.45" width="6.4" height="0.25" fill="#e89090"/><rect x="173.35" y="291.45" width="6.4" height="0.25" fill="#e89090"/><text x="175.75" y="299.6" text-anchor="middle" font-size="6.1" fill="#222">4</text><rect x="184.40" y="290.50" width="6.4" height="1.20" fill="#cc0000"/><rect x="195.45" y="291.45" width="6.4" height="0.25" fill="#e89090"/><rect x="206.50" y="290.50" width="6.4" height="1.20" fill="#cc0000"/><text x="208.90" y="299.6" text-anchor="middle" font-size="6.1" fill="#222">7</text><rect x="217.55" y="290.70" width="6.4" height="1.00" fill="#cc0000"/><rect x="228.60" y="290.70" width="6.4" height="1.00" fill="#cc0000"/><rect x="239.65" y="290.10" width="6.4" height="1.60" fill="#cc0000"/><text x="242.05" y="299.6" text-anchor="middle" font-size="6.1" fill="#222">10</text><rect x="250.70" y="289.10" width="6.4" height="2.60" fill="#cc0000"/><rect x="261.75" y="287.90" width="6.4" height="3.80" fill="#cc0000"/><rect x="272.80" y="287.30" width="6.4" height="4.40" fill="#cc0000"/><text x="275.20" y="299.6" text-anchor="middle" font-size="6.1" fill="#222">13</text><rect x="283.85" y="287.30" width="6.4" height="4.40" fill="#cc0000"/><rect x="294.90" y="286.70" width="6.4" height="5.00" fill="#cc0000"/><rect x="305.95" y="285.70" width="6.4" height="6.00" fill="#cc0000"/><text x="308.35" y="299.6" text-anchor="middle" font-size="6.1" fill="#222">16</text><rect x="317.00" y="283.90" width="6.4" height="7.80" fill="#cc0000"/><rect x="328.05" y="283.70" width="6.4" height="8.00" fill="#cc0000"/><rect x="339.10" y="283.30" width="6.4" height="8.40" fill="#cc0000"/><text x="341.50" y="299.6" text-anchor="middle" font-size="6.1" fill="#222">19</text><rect x="350.15" y="282.50" width="6.4" height="9.20" fill="#cc0000"/><rect x="361.20" y="282.50" width="6.4" height="9.20" fill="#cc0000"/><rect x="372.25" y="283.10" width="6.4" height="8.60" fill="#cc0000"/><text x="374.65" y="299.6" text-anchor="middle" font-size="6.1" fill="#222">22</text><rect x="383.30" y="283.30" width="6.4" height="8.40" fill="#cc0000"/><rect x="394.35" y="283.30" width="6.4" height="8.40" fill="#cc0000"/><rect x="405.40" y="283.90" width="6.4" height="7.80" fill="#cc0000"/><text x="407.80" y="299.6" text-anchor="middle" font-size="6.1" fill="#222">25</text><rect x="416.45" y="283.90" width="6.4" height="7.80" fill="#cc0000"/><rect x="427.50" y="283.90" width="6.4" height="7.80" fill="#cc0000"/><rect x="438.55" y="283.90" width="6.4" height="7.80" fill="#cc0000"/><text x="440.95" y="299.6" text-anchor="middle" font-size="6.1" fill="#222">28</text><rect x="449.60" y="284.10" width="6.4" height="7.60" fill="#cc0000"/><rect x="460.65" y="284.70" width="6.4" height="7.00" fill="#cc0000"/><rect x="471.70" y="285.30" width="6.4" height="6.40" fill="#cc0000"/><text x="474.10" y="299.6" text-anchor="middle" font-size="6.1" fill="#222">31</text><rect x="482.75" y="285.30" width="6.4" height="6.40" fill="#cc0000"/><rect x="493.80" y="285.90" width="6.4" height="5.80" fill="#cc0000"/><rect x="504.85" y="286.50" width="6.4" height="5.20" fill="#cc0000"/><text x="507.25" y="299.6" text-anchor="middle" font-size="6.1" fill="#222">34</text><rect x="515.90" y="287.10" width="6.4" height="4.60" fill="#cc0000"/><rect x="526.95" y="287.30" width="6.4" height="4.40" fill="#cc0000"/><rect x="538.00" y="288.10" width="6.4" height="3.60" fill="#cc0000"/><text x="540.40" y="299.6" text-anchor="middle" font-size="6.1" fill="#222">37</text><rect x="549.05" y="288.30" width="6.4" height="3.40" fill="#cc0000"/><rect x="560.10" y="288.30" width="6.4" height="3.40" fill="#cc0000"/><rect x="571.15" y="288.30" width="6.4" height="3.40" fill="#cc0000"/><text x="573.55" y="299.6" text-anchor="middle" font-size="6.1" fill="#222">40</text><rect x="582.20" y="288.90" width="6.4" height="2.80" fill="#cc0000"/><rect x="593.25" y="288.90" width="6.4" height="2.80" fill="#cc0000"/><rect x="604.30" y="289.50" width="6.4" height="2.20" fill="#cc0000"/><text x="606.70" y="299.6" text-anchor="middle" font-size="6.1" fill="#222">43</text><rect x="615.35" y="289.50" width="6.4" height="2.20" fill="#cc0000"/><rect x="626.40" y="289.90" width="6.4" height="1.80" fill="#cc0000"/><rect x="637.45" y="290.30" width="6.4" height="1.40" fill="#cc0000"/><text x="639.85" y="299.6" text-anchor="middle" font-size="6.1" fill="#222">46</text><rect x="648.50" y="290.30" width="6.4" height="1.40" fill="#cc0000"/><rect x="659.55" y="290.30" width="6.4" height="1.40" fill="#cc0000"/><rect x="670.60" y="290.30" width="6.4" height="1.40" fill="#cc0000"/><text x="673.00" y="299.6" text-anchor="middle" font-size="6.1" fill="#222">49</text><rect x="681.65" y="290.30" width="6.4" height="1.40" fill="#cc0000"/><rect x="692.70" y="290.90" width="6.4" height="0.80" fill="#cc0000"/><rect x="703.75" y="291.10" width="6.4" height="0.60" fill="#cc0000"/><text x="706.15" y="299.6" text-anchor="middle" font-size="6.1" fill="#222">52</text><rect x="714.80" y="291.10" width="6.4" height="0.60" fill="#cc0000"/><rect x="725.85" y="291.45" width="6.4" height="0.25" fill="#e89090"/><rect x="736.90" y="291.45" width="6.4" height="0.25" fill="#e89090"/><text x="739.30" y="299.6" text-anchor="middle" font-size="6.1" fill="#222">55</text><rect x="747.95" y="291.45" width="6.4" height="0.25" fill="#e89090"/><rect x="759.00" y="291.45" width="6.4" height="0.25" fill="#e89090"/><rect x="770.05" y="291.45" width="6.4" height="0.25" fill="#e89090"/><text x="772.45" y="299.6" text-anchor="middle" font-size="6.1" fill="#222">58</text><path d="M142.44 375.49H741.06" stroke="#333" stroke-width=".8" stroke-dasharray="1.5 1.55"/><path d="M142.44 368.98H741.06" stroke="#333" stroke-width=".8" stroke-dasharray="1.5 1.55"/><path d="M142.44 362.47H741.06" stroke="#333" stroke-width=".8" stroke-dasharray="1.5 1.55"/><path d="M142.44 355.96H741.06" stroke="#333" stroke-width=".8" stroke-dasharray="1.5 1.55"/><path d="M142.44 349.45H741.06" stroke="#333" stroke-width=".8" stroke-dasharray="1.5 1.55"/><path d="M142.44 342.94H741.06" stroke="#333" stroke-width=".8" stroke-dasharray="1.5 1.55"/><path d="M142.44 336.43H741.06" stroke="#333" stroke-width=".8" stroke-dasharray="1.5 1.55"/><path d="M142.44 329.92H741.06" stroke="#333" stroke-width=".8" stroke-dasharray="1.5 1.55"/><path d="M142.44 323.41H741.06" stroke="#333" stroke-width=".8" stroke-dasharray="1.5 1.55"/><path d="M174.45 317.70V381.50" stroke="#333" stroke-width=".8" stroke-dasharray="1.5 1.55"/><path d="M193.76 317.70V381.50" stroke="#333" stroke-width=".8" stroke-dasharray="1.5 1.55"/><path d="M207.46 317.70V381.50" stroke="#333" stroke-width=".8" stroke-dasharray="1.5 1.55"/><path d="M218.09 317.70V381.50" stroke="#333" stroke-width=".8" stroke-dasharray="1.5 1.55"/><path d="M226.77 317.70V381.50" stroke="#333" stroke-width=".8" stroke-dasharray="1.5 1.55"/><path d="M234.11 317.70V381.50" stroke="#333" stroke-width=".8" stroke-dasharray="1.5 1.55"/><path d="M240.47 317.70V381.50" stroke="#333" stroke-width=".8" stroke-dasharray="1.5 1.55"/><path d="M246.08 317.70V381.50" stroke="#333" stroke-width=".8" stroke-dasharray="1.5 1.55"/><path d="M251.10 317.70V381.50" stroke="#333" stroke-width=".8" stroke-dasharray="1.5 1.55"/><path d="M284.11 317.70V381.50" stroke="#333" stroke-width=".8" stroke-dasharray="1.5 1.55"/><path d="M303.42 317.70V381.50" stroke="#333" stroke-width=".8" stroke-dasharray="1.5 1.55"/><path d="M317.12 317.70V381.50" stroke="#333" stroke-width=".8" stroke-dasharray="1.5 1.55"/><path d="M327.75 317.70V381.50" stroke="#333" stroke-width=".8" stroke-dasharray="1.5 1.55"/><path d="M336.43 317.70V381.50" stroke="#333" stroke-width=".8" stroke-dasharray="1.5 1.55"/><path d="M343.77 317.70V381.50" stroke="#333" stroke-width=".8" stroke-dasharray="1.5 1.55"/><path d="M350.13 317.70V381.50" stroke="#333" stroke-width=".8" stroke-dasharray="1.5 1.55"/><path d="M355.74 317.70V381.50" stroke="#333" stroke-width=".8" stroke-dasharray="1.5 1.55"/><path d="M360.76 317.70V381.50" stroke="#333" stroke-width=".8" stroke-dasharray="1.5 1.55"/><path d="M393.77 317.70V381.50" stroke="#333" stroke-width=".8" stroke-dasharray="1.5 1.55"/><path d="M413.08 317.70V381.50" stroke="#333" stroke-width=".8" stroke-dasharray="1.5 1.55"/><path d="M426.78 317.70V381.50" stroke="#333" stroke-width=".8" stroke-dasharray="1.5 1.55"/><path d="M437.41 317.70V381.50" stroke="#333" stroke-width=".8" stroke-dasharray="1.5 1.55"/><path d="M446.09 317.70V381.50" stroke="#333" stroke-width=".8" stroke-dasharray="1.5 1.55"/><path d="M453.43 317.70V381.50" stroke="#333" stroke-width=".8" stroke-dasharray="1.5 1.55"/><path d="M459.79 317.70V381.50" stroke="#333" stroke-width=".8" stroke-dasharray="1.5 1.55"/><path d="M465.40 317.70V381.50" stroke="#333" stroke-width=".8" stroke-dasharray="1.5 1.55"/><path d="M470.42 317.70V381.50" stroke="#333" stroke-width=".8" stroke-dasharray="1.5 1.55"/><path d="M503.43 317.70V381.50" stroke="#333" stroke-width=".8" stroke-dasharray="1.5 1.55"/><path d="M522.74 317.70V381.50" stroke="#333" stroke-width=".8" stroke-dasharray="1.5 1.55"/><path d="M536.44 317.70V381.50" stroke="#333" stroke-width=".8" stroke-dasharray="1.5 1.55"/><path d="M547.07 317.70V381.50" stroke="#333" stroke-width=".8" stroke-dasharray="1.5 1.55"/><path d="M555.75 317.70V381.50" stroke="#333" stroke-width=".8" stroke-dasharray="1.5 1.55"/><path d="M563.09 317.70V381.50" stroke="#333" stroke-width=".8" stroke-dasharray="1.5 1.55"/><path d="M569.45 317.70V381.50" stroke="#333" stroke-width=".8" stroke-dasharray="1.5 1.55"/><path d="M575.06 317.70V381.50" stroke="#333" stroke-width=".8" stroke-dasharray="1.5 1.55"/><path d="M580.08 317.70V381.50" stroke="#333" stroke-width=".8" stroke-dasharray="1.5 1.55"/><path d="M613.09 317.70V381.50" stroke="#333" stroke-width=".8" stroke-dasharray="1.5 1.55"/><path d="M632.40 317.70V381.50" stroke="#333" stroke-width=".8" stroke-dasharray="1.5 1.55"/><path d="M646.10 317.70V381.50" stroke="#333" stroke-width=".8" stroke-dasharray="1.5 1.55"/><path d="M656.73 317.70V381.50" stroke="#333" stroke-width=".8" stroke-dasharray="1.5 1.55"/><path d="M665.41 317.70V381.50" stroke="#333" stroke-width=".8" stroke-dasharray="1.5 1.55"/><path d="M672.75 317.70V381.50" stroke="#333" stroke-width=".8" stroke-dasharray="1.5 1.55"/><path d="M679.11 317.70V381.50" stroke="#333" stroke-width=".8" stroke-dasharray="1.5 1.55"/><path d="M684.72 317.70V381.50" stroke="#333" stroke-width=".8" stroke-dasharray="1.5 1.55"/><path d="M689.74 317.70V381.50" stroke="#333" stroke-width=".8" stroke-dasharray="1.5 1.55"/><path d="M722.75 317.70V381.50" stroke="#333" stroke-width=".8" stroke-dasharray="1.5 1.55"/><rect x="142.4" y="322.6" width="32" height="9.6" fill="#fff"/><rect x="714.6" y="322.6" width="26" height="9.6" fill="#fff"/><rect x="365.50" y="380.99" width="4.50" height="1.01" fill="none" stroke="#2b95d6" stroke-width="1.25"/><rect x="370.00" y="380.44" width="4.54" height="1.56" fill="none" stroke="#2b95d6" stroke-width="1.25"/><rect x="374.54" y="379.63" width="4.51" height="2.37" fill="none" stroke="#2b95d6" stroke-width="1.25"/><rect x="379.05" y="378.73" width="4.53" height="3.27" fill="none" stroke="#2b95d6" stroke-width="1.25"/><rect x="383.58" y="377.39" width="4.52" height="4.61" fill="none" stroke="#2b95d6" stroke-width="1.25"/><rect x="388.10" y="375.21" width="4.54" height="6.79" fill="none" stroke="#2b95d6" stroke-width="1.25"/><rect x="392.64" y="372.38" width="4.51" height="9.62" fill="none" stroke="#2b95d6" stroke-width="1.25"/><rect x="397.15" y="369.70" width="4.54" height="12.30" fill="none" stroke="#2b95d6" stroke-width="1.25"/><rect x="401.69" y="368.15" width="4.52" height="13.85" fill="none" stroke="#2b95d6" stroke-width="1.25"/><rect x="406.21" y="368.22" width="4.53" height="13.78" fill="none" stroke="#2b95d6" stroke-width="1.25"/><rect x="410.74" y="369.75" width="4.52" height="12.25" fill="none" stroke="#2b95d6" stroke-width="1.25"/><rect x="415.26" y="372.06" width="4.53" height="9.94" fill="none" stroke="#2b95d6" stroke-width="1.25"/><rect x="419.79" y="374.48" width="4.53" height="7.52" fill="none" stroke="#2b95d6" stroke-width="1.25"/><rect x="424.31" y="376.23" width="4.53" height="5.77" fill="none" stroke="#2b95d6" stroke-width="1.25"/><rect x="428.84" y="376.64" width="4.52" height="5.36" fill="none" stroke="#2b95d6" stroke-width="1.25"/><rect x="433.36" y="375.13" width="4.53" height="6.87" fill="none" stroke="#2b95d6" stroke-width="1.25"/><rect x="437.88" y="371.59" width="4.52" height="10.41" fill="none" stroke="#2b95d6" stroke-width="1.25"/><rect x="442.41" y="366.03" width="4.52" height="15.97" fill="none" stroke="#2b95d6" stroke-width="1.25"/><rect x="446.93" y="359.81" width="4.52" height="22.19" fill="none" stroke="#2b95d6" stroke-width="1.25"/><rect x="451.45" y="355.51" width="4.53" height="26.49" fill="none" stroke="#2b95d6" stroke-width="1.25"/><rect x="455.98" y="354.22" width="4.52" height="27.78" fill="none" stroke="#2b95d6" stroke-width="1.25"/><rect x="460.51" y="355.62" width="4.52" height="26.38" fill="none" stroke="#2b95d6" stroke-width="1.25"/><rect x="465.03" y="357.55" width="4.52" height="24.45" fill="none" stroke="#2b95d6" stroke-width="1.25"/><rect x="469.56" y="359.10" width="4.53" height="22.90" fill="none" stroke="#2b95d6" stroke-width="1.25"/><rect x="474.08" y="359.35" width="4.53" height="22.65" fill="none" stroke="#2b95d6" stroke-width="1.25"/><rect x="478.61" y="358.13" width="4.53" height="23.87" fill="none" stroke="#2b95d6" stroke-width="1.25"/><rect x="483.13" y="355.93" width="4.52" height="26.07" fill="none" stroke="#2b95d6" stroke-width="1.25"/><rect x="487.66" y="353.58" width="4.52" height="28.42" fill="none" stroke="#2b95d6" stroke-width="1.25"/><rect x="492.18" y="351.81" width="4.53" height="30.19" fill="none" stroke="#2b95d6" stroke-width="1.25"/><rect x="496.71" y="351.01" width="4.52" height="30.99" fill="none" stroke="#2b95d6" stroke-width="1.25"/><rect x="501.23" y="350.85" width="4.53" height="31.15" fill="none" stroke="#2b95d6" stroke-width="1.25"/><rect x="505.76" y="350.73" width="4.52" height="31.27" fill="none" stroke="#2b95d6" stroke-width="1.25"/><rect x="510.28" y="349.43" width="4.52" height="32.57" fill="none" stroke="#2b95d6" stroke-width="1.25"/><rect x="514.81" y="345.80" width="4.53" height="36.20" fill="none" stroke="#2b95d6" stroke-width="1.25"/><rect x="519.33" y="339.75" width="4.53" height="42.25" fill="none" stroke="#2b95d6" stroke-width="1.25"/><rect x="523.86" y="332.30" width="4.52" height="49.70" fill="none" stroke="#2b95d6" stroke-width="1.25"/><rect x="528.38" y="325.80" width="4.52" height="56.20" fill="none" stroke="#2b95d6" stroke-width="1.25"/><rect x="532.91" y="322.34" width="4.52" height="59.66" fill="none" stroke="#2b95d6" stroke-width="1.25"/><rect x="537.43" y="323.53" width="4.52" height="58.47" fill="none" stroke="#2b95d6" stroke-width="1.25"/><rect x="541.96" y="329.20" width="4.53" height="52.80" fill="none" stroke="#2b95d6" stroke-width="1.25"/><rect x="546.48" y="338.50" width="4.53" height="43.50" fill="none" stroke="#2b95d6" stroke-width="1.25"/><rect x="551.01" y="349.44" width="4.52" height="32.56" fill="none" stroke="#2b95d6" stroke-width="1.25"/><rect x="555.53" y="359.31" width="4.52" height="22.69" fill="none" stroke="#2b95d6" stroke-width="1.25"/><rect x="560.05" y="366.63" width="4.53" height="15.37" fill="none" stroke="#2b95d6" stroke-width="1.25"/><rect x="564.58" y="370.78" width="4.52" height="11.22" fill="none" stroke="#2b95d6" stroke-width="1.25"/><rect x="569.11" y="372.58" width="4.52" height="9.42" fill="none" stroke="#2b95d6" stroke-width="1.25"/><rect x="573.63" y="373.20" width="4.52" height="8.80" fill="none" stroke="#2b95d6" stroke-width="1.25"/><rect x="578.15" y="374.04" width="4.52" height="7.96" fill="none" stroke="#2b95d6" stroke-width="1.25"/><rect x="582.68" y="376.17" width="4.52" height="5.83" fill="none" stroke="#2b95d6" stroke-width="1.25"/><rect x="587.20" y="378.02" width="4.52" height="3.98" fill="none" stroke="#2b95d6" stroke-width="1.25"/><rect x="591.73" y="378.91" width="4.52" height="3.09" fill="none" stroke="#2b95d6" stroke-width="1.25"/><rect x="596.25" y="379.65" width="4.53" height="2.35" fill="none" stroke="#2b95d6" stroke-width="1.25"/><rect x="600.78" y="380.40" width="4.52" height="1.60" fill="none" stroke="#2b95d6" stroke-width="1.25"/><rect x="605.30" y="381.15" width="4.53" height="0.85" fill="none" stroke="#2b95d6" stroke-width="1.25"/><polyline points="365.80,382.00 370.30,381.94 374.84,381.84 379.35,381.70 383.88,381.50 388.40,381.22 392.94,380.80 397.45,380.22 401.99,379.47 406.51,378.62 411.04,377.78 415.56,377.03 420.09,376.43 424.61,375.97 429.14,375.62 433.66,375.29 438.18,374.87 442.71,374.24 447.23,373.26 451.75,371.91 456.28,370.29 460.81,368.60 465.33,366.99 469.86,365.50 474.38,364.10 478.91,362.72 483.43,361.26 487.96,359.67 492.48,357.94 497.01,356.10 501.53,354.21 506.06,352.31 510.58,350.40 515.11,348.41 519.63,346.20 524.16,343.63 528.68,340.60 533.21,337.17 537.73,333.53 542.26,329.96 546.78,326.74 551.31,324.09 555.83,322.10 560.35,320.72 564.88,319.78 569.41,319.10 573.93,318.52 578.45,317.98 582.98,317.50 587.50,317.14 592.03,316.90 596.55,316.90 601.08,316.90 605.60,316.90 610.13,316.90 614.65,316.90 619.18,316.90 623.70,316.90 628.23,316.90 632.75,316.90 637.28,316.90 641.80,316.90 646.33,316.90 650.85,316.90 655.38,316.90 659.90,316.90 664.43,316.90 668.95,316.90 673.48,316.90 678.00,316.90 682.53,316.90 687.05,316.90 691.58,316.90 696.10,316.90 700.63,316.90 705.15,316.90 709.68,316.90 714.20,316.90 718.73,316.90 723.25,316.90 742.06,316.90" fill="none" stroke="#9c1414" stroke-width="1.4"/><path d="M140.94 382.10H742.56" stroke="#3a9bd3" stroke-width="1.8"/><path d="M141.44 316.40V382.80" stroke="#111" stroke-width="1.3"/><path d="M141.44 316.90H578.14" stroke="#000" stroke-width="1.3"/><path d="M741.66 316.40V382.80" stroke="#222" stroke-width="1.3"/><text x="139.6" y="384.30" text-anchor="end" font-size="6.1" fill="#8c2222">0</text><text x="139.6" y="377.79" text-anchor="end" font-size="6.1" fill="#8c2222">10</text><text x="139.6" y="371.28" text-anchor="end" font-size="6.1" fill="#8c2222">20</text><text x="139.6" y="364.77" text-anchor="end" font-size="6.1" fill="#8c2222">30</text><text x="139.6" y="358.26" text-anchor="end" font-size="6.1" fill="#8c2222">40</text><text x="139.6" y="351.75" text-anchor="end" font-size="6.1" fill="#8c2222">50</text><text x="139.6" y="345.24" text-anchor="end" font-size="6.1" fill="#8c2222">60</text><text x="139.6" y="338.73" text-anchor="end" font-size="6.1" fill="#8c2222">70</text><text x="139.6" y="332.22" text-anchor="end" font-size="6.1" fill="#8c2222">80</text><text x="139.6" y="325.71" text-anchor="end" font-size="6.1" fill="#8c2222">90</text><text x="139.6" y="319.20" text-anchor="end" font-size="6.1" fill="#8c2222">100</text><text x="747.3" y="384.30" font-size="6.1" fill="#3a9bd3">0</text><text x="750.4" y="377.79" font-size="6.1" fill="#3a9bd3">.6</text><text x="747.3" y="371.28" font-size="6.1" fill="#3a9bd3">1.2</text><text x="747.3" y="364.77" font-size="6.1" fill="#3a9bd3">1.8</text><text x="747.3" y="358.26" font-size="6.1" fill="#3a9bd3">2.5</text><text x="747.3" y="351.75" font-size="6.1" fill="#3a9bd3">3.1</text><text x="747.3" y="345.24" font-size="6.1" fill="#3a9bd3">3.7</text><text x="747.3" y="338.73" font-size="6.1" fill="#3a9bd3">4.3</text><text x="747.3" y="332.22" font-size="6.1" fill="#3a9bd3">4.9</text><text x="747.3" y="325.71" font-size="6.1" fill="#3a9bd3">5.5</text><text x="747.3" y="319.20" font-size="6.1" fill="#3a9bd3">6.1</text><text x="139.84" y="390.2" text-anchor="middle" font-size="6.1" fill="#222">0.01</text><text x="250.50" y="390.2" text-anchor="middle" font-size="6.1" fill="#222">0.10</text><text x="360.16" y="390.2" text-anchor="middle" font-size="6.1" fill="#222">1.0</text><text x="469.82" y="390.2" text-anchor="middle" font-size="6.1" fill="#222">10</text><text x="579.48" y="390.2" text-anchor="middle" font-size="6.1" fill="#222">100</text><text x="689.14" y="390.2" text-anchor="middle" font-size="6.1" fill="#222">1000</text><path d="M782.3 316.8V382.6" stroke="#b04848" stroke-width=".9"/><path d="M780.6 382.30h1.7" stroke="#b04848" stroke-width=".7"/><text x="786.8" y="384.60" font-size="6.1" fill="#8c2222">0</text><path d="M780.6 369.20h1.7" stroke="#b04848" stroke-width=".7"/><text x="786.8" y="371.50" font-size="6.1" fill="#8c2222">10</text><path d="M780.6 356.10h1.7" stroke="#b04848" stroke-width=".7"/><text x="786.8" y="358.40" font-size="6.1" fill="#8c2222">20</text><path d="M780.6 343.00h1.7" stroke="#b04848" stroke-width=".7"/><text x="786.8" y="345.30" font-size="6.1" fill="#8c2222">30</text><path d="M780.6 329.90h1.7" stroke="#b04848" stroke-width=".7"/><path d="M780.6 316.80h1.7" stroke="#b04848" stroke-width=".7"/><rect x="778" y="371.3" width="3.8" height="10.9" fill="#22e022"/><path d="M757 382.2H782.6" stroke="#a02020" stroke-width="1"/></svg>
<div class="t" style="left:143px;top:323.1px;color:#941c1c">Cumulate%</div>
<div class="t" style="left:715.6px;top:323.1px;color:#3a9bd3">Volume%</div>
<div class="t" style="left:426px;top:391.9px;color:#222">Particle Size (um)</div>
<div class="t" style="left:725px;top:383.4px;color:#a02828">Optics Concentration</div>
<div class="h" style="left:758.4px;top:373.3px;color:#a01818">8.10</div>
<div class="abs" style="left:0;top:403.6px;width:800px;height:13.4px;background:#f0f0f0;"></div>
<div class="abs" style="left:0;top:403.6px;width:797px;height:.8px;background:#fafafa;"></div>
<div class="abs" style="left:33px;top:416.2px;width:767px;height:.8px;background:#5a6478;"></div>
<div class="sp" style="left:0px;width:55px"></div>
<div class="sp" style="left:57px;width:12px"></div>
<div class="sp" style="left:70px;width:60.5px"></div>
<div class="sp" style="left:132.5px;width:90.0px"></div>
<div class="sp" style="left:224.5px;width:83.0px"></div>
<div class="sp" style="left:309.5px;width:77.0px"></div>
<div class="sp" style="left:388.5px;width:52.0px"></div>
<div class="sp" style="left:442.5px;width:344.0px"></div>
<div class="abs" style="left:60.3px;top:408px;width:5.4px;height:5.4px;border-radius:50%;background:#14e614;"></div>
<div class="s" style="left:3.4px">CommPort:COM8</div>
<div class="s" style="left:72.4px">Status:Connected</div>
<div class="s" style="left:136.4px">Analyse-Mode:Independent</div>
<div class="s" style="left:228.2px">Instrument:Winner2308A</div>
<div class="s" style="left:313px">Test Range:1-2000<i>μ</i>m</div>
<div class="s" style="left:391.6px">View: Average</div>
<div class="s" style="left:447.6px">Jinan Winner Particle Technology Co.,Ltd</div>
</div></body></html>
